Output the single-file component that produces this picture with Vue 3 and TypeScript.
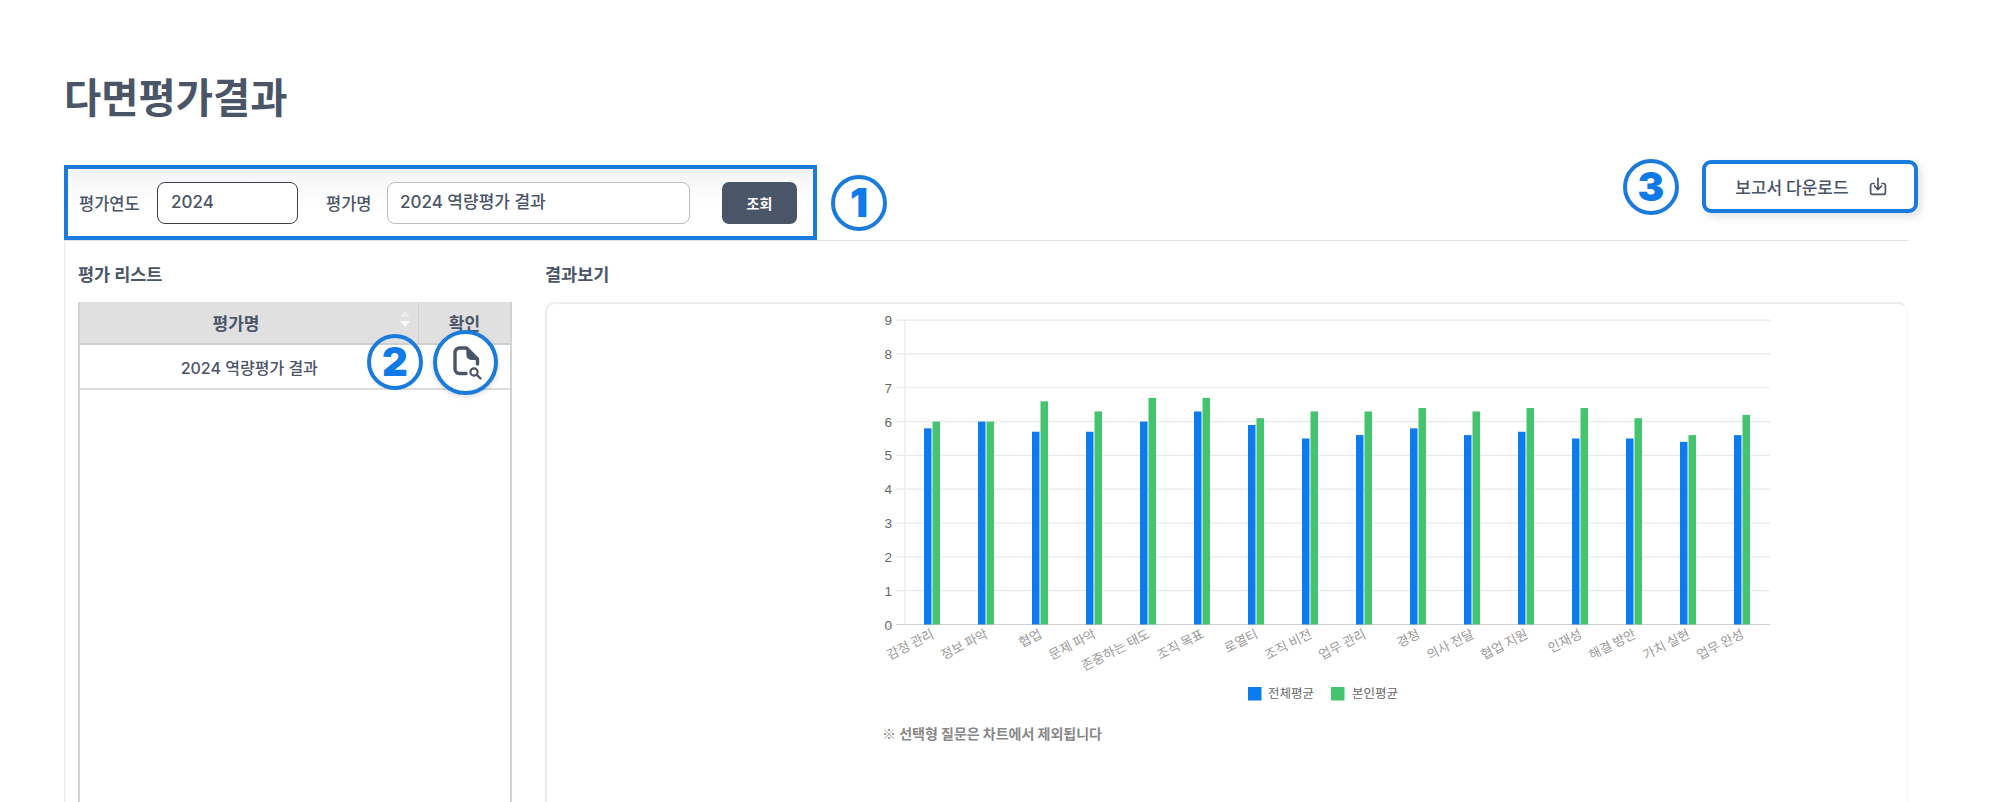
<script setup lang="ts">
interface Item { name: string; all: number; mine: number }
const items: Item[] = [
  { name: '감정 관리', all: 5.8, mine: 6 },
  { name: '정보 파악', all: 6, mine: 6 },
  { name: '협업', all: 5.7, mine: 6.6 },
  { name: '문제 파악', all: 5.7, mine: 6.3 },
  { name: '존중하는 태도', all: 6, mine: 6.7 },
  { name: '조직 목표', all: 6.3, mine: 6.7 },
  { name: '로열티', all: 5.9, mine: 6.1 },
  { name: '조직 비전', all: 5.5, mine: 6.3 },
  { name: '업무 관리', all: 5.6, mine: 6.3 },
  { name: '경청', all: 5.8, mine: 6.4 },
  { name: '의사 전달', all: 5.6, mine: 6.3 },
  { name: '협업 지원', all: 5.7, mine: 6.4 },
  { name: '인재성', all: 5.5, mine: 6.4 },
  { name: '해결 방안', all: 5.5, mine: 6.1 },
  { name: '가치 실현', all: 5.4, mine: 5.6 },
  { name: '업무 완성', all: 5.6, mine: 6.2 }
]
const ticks = [0, 1, 2, 3, 4, 5, 6, 7, 8, 9]
const axisX = 905
const step = 54
const zeroY = 624.5
const unit = 33.82
const y = (v: number) => zeroY - v * unit
const cx = (i: number) => axisX + step * i + 27
</script>

<template>
  <div class="page">
    <h1 class="title">다면평가결과</h1>

    <div class="toolbar">
      <div class="filter-wrap">
        <div class="filter">
          <span class="label">평가연도</span>
          <div class="field year">2024</div>
          <span class="label name-label">평가명</span>
          <div class="field name">2024 역량평가 결과</div>
          <button class="search" type="button">조회</button>
        </div>
        <span class="marker marker-one">1</span>
      </div>
      <div class="download-wrap">
        <span class="marker marker-three">3</span>
        <button class="download" type="button">
          <span>보고서 다운로드</span>
          <svg width="18" height="19" viewBox="0 0 18 19" fill="none" stroke="#4a5568" stroke-width="1.7" stroke-linecap="round" stroke-linejoin="round">
            <path d="M5 6.5H3.6A2 2 0 0 0 1.6 8.5V15.4A2 2 0 0 0 3.6 17.4H14.4A2 2 0 0 0 16.4 15.4V8.5A2 2 0 0 0 14.4 6.5H13" />
            <path d="M9 1.2V12.4M5.4 9L9 12.6L12.6 9" />
          </svg>
        </button>
      </div>
    </div>

    <div class="panel">
      <section class="list">
        <h2 class="heading">평가 리스트</h2>
        <div class="table-wrap">
          <table class="table">
            <thead>
              <tr>
                <th class="col-name">
                  평가명
                  <span class="sort"><i class="up"></i><i class="down"></i></span>
                </th>
                <th class="col-check">확인</th>
              </tr>
            </thead>
            <tbody>
              <tr>
                <td class="cell-name">2024 역량평가 결과</td>
                <td></td>
              </tr>
            </tbody>
          </table>
          <span class="marker marker-two">2</span>
          <span class="view-ring">
            <svg width="30" height="34" viewBox="0 0 30 34" fill="none" stroke="#4a5568" stroke-width="3.4" stroke-linecap="round" stroke-linejoin="round">
              <path d="M13 27.5H6.5A4.5 4.5 0 0 1 2 23V6.5A4.5 4.5 0 0 1 6.5 2H13.5L24.5 13V18" />
              <path d="M14 3V9A4.5 4.5 0 0 0 18.5 13.5H24Z" fill="#4a5568" stroke-width="1.2" />
              <circle cx="21" cy="26" r="3.6" stroke-width="2.2" />
              <path d="M24 29L27.5 32.5" stroke-width="2.4" />
            </svg>
          </span>
        </div>
      </section>

      <section class="result">
        <h2 class="heading">결과보기</h2>
        <div class="card">
          <svg class="chart" width="1361" height="520" viewBox="547 304 1361 520">
            <line v-for="t in ticks" :key="'g' + t" x1="896" x2="1770" :y1="y(t)" :y2="y(t)" :stroke="t === 0 ? '#d0d0d0' : '#e9e9e9'" stroke-width="1.2" />
            <line :x1="axisX" :x2="axisX" :y1="y(9)" :y2="zeroY" stroke="#e9e9e9" stroke-width="1.2" />
            <text v-for="t in ticks" :key="'t' + t" x="892" :y="y(t) + 5" text-anchor="end" class="tick">{{ t }}</text>
            <g v-for="(it, i) in items" :key="it.name">
              <rect :x="cx(i) - 8" :y="y(it.all)" width="7.5" :height="zeroY - y(it.all)" fill="#0d7bf0" />
              <rect :x="cx(i) + 0.5" :y="y(it.mine)" width="7.5" :height="zeroY - y(it.mine)" fill="#45c46f" />
              <text class="cat" text-anchor="end" :transform="`translate(${cx(i) + 3} 637) rotate(-27)`">{{ it.name }}</text>
            </g>
            <rect x="1248" y="687" width="13.5" height="13.5" fill="#0d7bf0" />
            <text x="1268" y="698" class="legend">전체평균</text>
            <rect x="1331" y="687" width="13.5" height="13.5" fill="#45c46f" />
            <text x="1352" y="698" class="legend">본인평균</text>
            <text x="882" y="739" class="note">※ 선택형 질문은 차트에서 제외됩니다</text>
          </svg>
        </div>
      </section>
    </div>
  </div>
</template>

<style scoped>
.page {
  box-sizing: border-box;
  height: 802px;
  overflow: hidden;
  padding: 69px 92px 0 64px;
  font-family: Inter, "Noto Sans CJK KR", sans-serif;
  color: #4a5568;
  background: #fff;
}
.title {
  margin: 0;
  font-size: 40.5px;
  line-height: 53px;
  font-weight: 700;
  color: #4a5568;
  font-family: "Noto Sans CJK KR", sans-serif;
}
.toolbar {
  display: flex;
  justify-content: space-between;
  margin-top: 43px;
  margin-right: -10px;
  height: 75px;
}
.filter-wrap {
  display: flex;
  align-items: center;
  gap: 14px;
  height: 75px;
}
.filter {
  box-sizing: border-box;
  width: 753px;
  height: 75px;
  display: flex;
  align-items: center;
  padding: 0 16px 0 11px;
  border: 4px solid #1a7bdc;
  background: linear-gradient(#f4f4f6, #ffffff 55%);
}
.label {
  font-size: 16.5px;
  font-weight: 500;
  width: 78px;
  flex: none;
  font-family: "Noto Sans CJK KR", sans-serif;
}
.name-label {
  width: 61px;
  margin-left: 28px;
}
.field {
  box-sizing: border-box;
  height: 42px;
  line-height: 39px;
  border-radius: 8px;
  background: #fff;
  font-weight: 500;
  color: #4a5568;
  font-family: Inter, "Noto Sans CJK KR", sans-serif;
}
.year {
  width: 141px;
  border: 1.5px solid #3b3f46;
  padding-left: 13px;
  font-size: 17px;
}
.name {
  width: 303px;
  border: 1.5px solid #bcbcbc;
  padding-left: 12px;
  font-size: 17px;
}
.search {
  width: 75px;
  height: 42px;
  margin-left: 32px;
  border: 0;
  border-radius: 7px;
  background: #4a5568;
  color: #fff;
  font-size: 14px;
  font-weight: 700;
  font-family: "Noto Sans CJK KR", sans-serif;
}
.marker {
  box-sizing: border-box;
  width: 56px;
  height: 56px;
  flex: none;
  border: 4px solid #1a7bdc;
  border-radius: 50%;
  background: #fff;
  color: #0f7ae8;
  font-family: Inter, sans-serif;
  font-size: 40px;
  font-weight: 900;
  line-height: 48px;
  text-align: center;
}
.download-wrap {
  display: flex;
  align-items: flex-start;
  gap: 23px;
  margin-top: -5px;
}
.download {
  box-sizing: border-box;
  width: 216px;
  height: 53px;
  display: flex;
  align-items: center;
  justify-content: center;
  gap: 20px;
  padding: 0 0 0 2px;
  border: 4px solid #1a7bdc;
  border-radius: 9px;
  background: #fff;
  box-shadow: 3px 4px 8px rgba(0, 0, 0, 0.12);
  color: #4a5568;
  font-size: 17px;
  font-weight: 500;
  font-family: "Noto Sans CJK KR", sans-serif;
}
.marker-three {
  margin-top: -1px;
}
.panel {
  display: flex;
  gap: 33px;
  padding-left: 14px;
  height: 600px;
  border-top: 1px solid #e2e2e2;
  box-shadow: inset 2px 0 2px -1px #e6e6e6;
}
.list {
  width: 434px;
  flex: none;
}
.result {
  flex: 1;
  min-width: 0;
}
.heading {
  margin: 22px 0 17px;
  font-size: 17.5px;
  line-height: 22px;
  font-weight: 700;
  color: #4a5568;
  font-family: "Noto Sans CJK KR", sans-serif;
}
.table-wrap {
  position: relative;
  box-sizing: border-box;
  height: 560px;
  border-left: 2px solid #d2d2d2;
  border-right: 2px solid #d2d2d2;
}
.table {
  width: 100%;
  border-collapse: collapse;
  table-layout: fixed;
}
.table th {
  height: 41px;
  padding: 0;
  background: #e0e0e0;
  border-bottom: 2px solid #cfcfcf;
  font-size: 17px;
  font-weight: 700;
  color: #4a5568;
  font-family: "Noto Sans CJK KR", sans-serif;
  position: relative;
}
.table th.col-name {
  border-right: 1px solid #cfcfcf;
  padding-right: 26px;
}
.col-check {
  width: 91px;
}
.sort {
  position: absolute;
  right: 8px;
  top: 9px;
  display: flex;
  flex-direction: column;
  gap: 4px;
}
.sort i {
  display: block;
  width: 0;
  height: 0;
  border-left: 5px solid transparent;
  border-right: 5px solid transparent;
}
.sort .up {
  border-bottom: 6px solid #ececec;
}
.sort .down {
  border-top: 6px solid #fafafa;
}
.table td {
  height: 43px;
  padding: 0;
  border-bottom: 2px solid #dcdcdc;
  font-size: 16px;
  font-weight: 500;
  color: #4a5568;
  text-align: center;
}
.marker-two {
  position: absolute;
  left: 287px;
  top: 32px;
  background: transparent;
}
.view-ring {
  position: absolute;
  left: 353px;
  top: 28px;
  box-sizing: border-box;
  width: 65px;
  height: 65px;
  display: flex;
  align-items: center;
  justify-content: center;
  padding-left: 4px;
  border: 4px solid #1a7bdc;
  border-radius: 50%;
  background: #fff;
  box-shadow: 0 2px 5px rgba(0, 0, 0, 0.15);
}
.card {
  box-sizing: border-box;
  height: 560px;
  border: 2px solid #ececec;
  border-right-color: #f9f9f9;
  border-bottom: 0;
  border-radius: 10px 10px 0 0;
  overflow: hidden;
}
.chart {
  display: block;
}
.tick {
  font-size: 13.5px;
  fill: #666;
  font-family: "Liberation Sans", sans-serif;
}
.cat {
  font-size: 13px;
  fill: #999;
  font-family: "Noto Sans CJK KR", sans-serif;
}
.legend {
  font-size: 12.5px;
  fill: #666;
  font-family: "Noto Sans CJK KR", sans-serif;
}
.note {
  font-size: 14px;
  font-weight: 700;
  fill: #888;
  font-family: "Noto Sans CJK KR", sans-serif;
}
</style>
